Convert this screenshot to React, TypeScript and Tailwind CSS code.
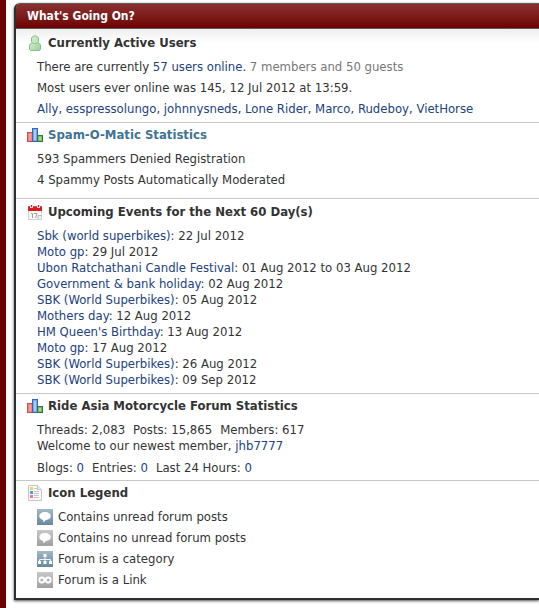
import type { ReactNode } from "react"

const events = [
  { name: "Sbk (world superbikes)", date: "22 Jul 2012" },
  { name: "Moto gp", date: "29 Jul 2012" },
  { name: "Ubon Ratchathani Candle Festival", date: "01 Aug 2012 to 03 Aug 2012" },
  { name: "Government & bank holiday", date: "02 Aug 2012" },
  { name: "SBK (World Superbikes)", date: "05 Aug 2012" },
  { name: "Mothers day", date: "12 Aug 2012" },
  { name: "HM Queen's Birthday", date: "13 Aug 2012" },
  { name: "Moto gp", date: "17 Aug 2012" },
  { name: "SBK (World Superbikes)", date: "26 Aug 2012" },
  { name: "SBK (World Superbikes)", date: "09 Sep 2012" },
]

const members = ["Ally", "esspressolungo", "johnnysneds", "Lone Rider", "Marco", "Rudeboy", "VietHorse"]

const UserIcon = () => (
  <svg viewBox="0 0 16 16" className="h-4 w-4 shrink-0" aria-hidden="true">
    <defs>
      <linearGradient id="user-fill" x1="0" y1="0" x2="1" y2="1">
        <stop offset="0" stopColor="#e0f3de" />
        <stop offset="1" stopColor="#9bd299" />
      </linearGradient>
    </defs>
    <path
      d="M6.500 1h3l2 2v3.500l-.8 1.200 2.800 2V14l-1 1.500h-9l-1-1.500V9.700l2.800-2-.8-1.200V3z"
      fill="url(#user-fill)"
      stroke="#80bd82"
      strokeLinejoin="round"
    />
    <path d="M5 7.500l1.500 1h3l1.500-1" fill="none" stroke="#8cc68c" />
  </svg>
)

const BarsIcon = () => (
  <svg viewBox="0 0 16 16" className="h-4 w-4 shrink-0" aria-hidden="true">
    <rect x=".5" y="5.500" width="5" height="9" fill="#f79a98" stroke="#d1484c" />
    <rect x="1.500" y="6.500" width="3" height="7" fill="none" stroke="#f6837f" />
    <rect x="5.500" y="1.500" width="5" height="13" fill="#a9cbf9" stroke="#3566c4" />
    <rect x="6.500" y="2.500" width="3" height="11" fill="none" stroke="#74a6ee" />
    <rect x="10.500" y="8.500" width="5" height="6" fill="#a5d9a0" stroke="#33703a" />
    <rect x="11.500" y="9.500" width="3" height="4" fill="none" stroke="#76bd72" />
  </svg>
)

const CalendarIcon = () => (
  <svg viewBox="0 0 16 16" className="h-4 w-4 shrink-0" aria-hidden="true">
    <rect x="1.500" y="2.500" width="13" height="13" fill="#f7f7f7" stroke="#cfcfcf" />
    <path d="M1 2h14v5H1z" fill="#d91c1c" />
    <path d="M1 2h14v1H1z" fill="#ea4a42" />
    <path d="M3 1h3v3H3zM10 1h3v3h-3z" fill="#f4d2d0" />
    <path d="M4 1h1v2H4zM11 1h1v2h-1z" fill="#555" />
    <path d="M4 9.500h1.500V14M7 9.500h3L8.500 14" fill="none" stroke="#a0a0a0" />
    <path d="M11 15.500v-4h4" fill="#ececec" stroke="#bdbdbd" />
  </svg>
)

const LegendIcon = () => (
  <svg viewBox="0 0 16 16" className="h-4 w-4 shrink-0" aria-hidden="true">
    <path d="M1.500.5h9l4 4v11h-13z" fill="#fafafa" stroke="#c4c4c4" />
    <path d="M10.500.5v4h4" fill="#eee" stroke="#c4c4c4" />
    <path d="M3 2h3v3H3z" fill="#f5d45a" />
    <path d="M3 6h3v3H3z" fill="#3aa5ee" />
    <path d="M3 10h3v3H3z" fill="#f7739c" />
    <path d="M7 3.500h3M7 6.500h5M7 8.500h5M7 10.500h5M7 12.500h5" stroke="#c8c8c8" />
  </svg>
)

const BubbleShape = () => (
  <path d="M8 3c3.400 0 5.800 1.700 5.800 4.100 0 2.300-2 3.800-4.800 4L6.200 13.500l.2-2.500C4 10.600 2.300 9.200 2.300 7.100 2.300 4.700 4.700 3 8 3z" fill="#fff" />
)

const TreeShape = () => (
  <g fill="#fff">
    <path d="M6.500 3h3v3h-3zM1 10h3v3H1zM6.500 10h3v3h-3zM12 10h3v3h-3z" />
    <path d="M8 6v4M2.500 10V8.500h11V10" fill="none" stroke="#eef3f6" />
  </g>
)

const LinkShape = () => (
  <g fill="none" stroke="#fff" strokeWidth="1.800">
    <circle cx="4.800" cy="8" r="2.500" />
    <circle cx="11.200" cy="8" r="2.500" />
    <path d="M7 8h2" />
  </g>
)

const legend = [
  { label: "Contains unread forum posts", shape: <BubbleShape />, tile: "bg-linear-to-b from-[#a3b9c7] to-[#66889e]" },
  { label: "Contains no unread forum posts", shape: <BubbleShape />, tile: "bg-linear-to-b from-[#c8c8c8] to-[#a0a0a0]" },
  { label: "Forum is a category", shape: <TreeShape />, tile: "bg-linear-to-b from-[#a3b9c7] to-[#66889e]" },
  { label: "Forum is a Link", shape: <LinkShape />, tile: "bg-linear-to-b from-[#c8c8c8] to-[#a0a0a0]" },
]

const Link = ({ children }: { children: ReactNode }) => (
  <a href="#" className="text-[#22427c] hover:underline">
    {children}
  </a>
)

const Heading = ({ icon, children }: { icon: ReactNode; children: ReactNode }) => (
  <h3 className="flex h-5 items-center gap-[5px] text-[13px] font-bold">
    {icon}
    <span>{children}</span>
  </h3>
)

const App = () => {
  return (
    <div className="flex min-h-screen bg-white font-['DejaVu_Sans_Condensed','DejaVu_Sans',sans-serif] text-[13px] text-[#333333]">
      <div className="w-1.5 shrink-0 bg-[#6d0000]" />
      <div className="min-w-0 flex-1 overflow-hidden pt-[3px] pb-2 pl-2">
        <main className="rounded-tl-md border-t border-b-2 border-l-2 border-t-[#5c5c5c] border-b-[#2e2e2e] border-l-[#2e2e2e] bg-white shadow-[0_1px_3px_#000000b0]">
          <h2 className="flex h-[25px] items-center rounded-tl-sm border-b border-[#5c5c5c] bg-linear-to-b from-[#8a3030] to-[#6d0000] pl-[11px] text-[12px] font-bold text-white">
            What's Going On?
          </h2>

          <section className="border-b border-[#c8c8c8] bg-linear-to-b from-[#eeeeee] to-white to-15% pt-1 pb-[3px] pl-[11px]">
            <Heading icon={<UserIcon />}>Currently Active Users</Heading>
            <div className="pt-[3px] pl-[10px] leading-[21px]">
              <p>
                There are currently <Link>57 users online</Link>. <span className="text-[#777777]">7 members and 50 guests</span>
              </p>
              <p>Most users ever online was 145, 12 Jul 2012 at 13:59.</p>
              <p>
                {members.map((name, i) => (
                  <span key={name}>
                    {i > 0 && ", "}
                    <Link>{name}</Link>
                  </span>
                ))}
              </p>
            </div>
          </section>

          <section className="border-b border-[#c8c8c8] pt-0.5 pb-2 pl-[11px]">
            <Heading icon={<BarsIcon />}>
              <a href="#" className="text-[#417394]">Spam-O-Matic Statistics</a>
            </Heading>
            <div className="pt-[3px] pl-[10px] leading-[21px]">
              <p>593 Spammers Denied Registration</p>
              <p>4 Spammy Posts Automatically Moderated</p>
            </div>
          </section>

          <section className="border-b border-[#c8c8c8] pt-[3px] pb-[5px] pl-[11px]">
            <Heading icon={<CalendarIcon />}>Upcoming Events for the Next 60 Day(s)</Heading>
            <ul className="pt-1.5 pl-[10px] leading-4">
              {events.map((event) => (
                <li key={event.name + event.date}>
                  <Link>{event.name}</Link>: {event.date}
                </li>
              ))}
            </ul>
          </section>

          <section className="border-b border-[#c8c8c8] pt-0.5 pb-0.5 pl-[11px]">
            <Heading icon={<BarsIcon />}>Ride Asia Motorcycle Forum Statistics</Heading>
            <div className="pt-1.5 pl-[10px] leading-4">
              <div className="flex gap-2">
                <span>Threads: 2,083</span>
                <span>Posts: 15,865</span>
                <span>Members: 617</span>
              </div>
              <p>
                Welcome to our newest member, <Link>jhb7777</Link>
              </p>
              <div className="flex gap-2 pt-[3px] leading-[21px]">
                <span>Blogs: <Link>0</Link></span>
                <span>Entries: <Link>0</Link></span>
                <span>Last 24 Hours: <Link>0</Link></span>
              </div>
            </div>
          </section>

          <section className="pt-0.5 pb-2 pl-[11px]">
            <Heading icon={<LegendIcon />}>Icon Legend</Heading>
            <ul className="pt-[3px] pl-[10px] leading-[21px]">
              {legend.map((item) => (
                <li key={item.label} className="flex items-center gap-[5px]">
                  <svg viewBox="0 0 16 16" className={`h-4 w-4 shrink-0 ${item.tile}`} aria-hidden="true">
                    {item.shape}
                  </svg>
                  {item.label}
                </li>
              ))}
            </ul>
          </section>
        </main>
      </div>
    </div>
  )
}

export default App
